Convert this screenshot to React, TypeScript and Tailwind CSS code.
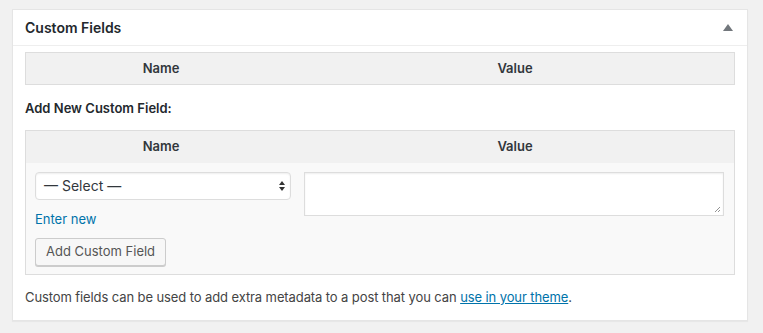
export default function App() {
  const font = { fontFamily: 'Inter, "Liberation Sans", sans-serif' };
  return (
    <div className="min-h-screen w-[763px] h-[333px] bg-[#f1f1f1] pt-[9px] pl-[12px]" style={font}>
      <div className="w-[736px] h-[312px] bg-white border border-[#e5e5e5] shadow-[0_1px_1px_rgba(0,0,0,0.04)]">
        {/* Header */}
        <div className="h-[36px] border-b border-[#eeeeee] flex items-center justify-between pl-[12px] pr-[14px]">
          <h2 className="text-[14px] font-semibold text-[#23282d]">Custom Fields</h2>
          <span className="w-0 h-0 border-l-[5px] border-r-[5px] border-b-[7px] border-l-transparent border-r-transparent border-b-[#72777c]" />
        </div>

        <div className="px-[12px] pt-[6px]">
          {/* Existing fields */}
          <div className="grid grid-cols-[270px_1fr] h-[33px] bg-[#f1f1f1] border border-[#dddddd] text-[13px] font-semibold text-[#32373c]">
            <div className="flex items-center justify-center">Name</div>
            <div className="flex items-center justify-center">Value</div>
          </div>

          <p className="mt-[14px] text-[13px] font-semibold text-[#23282d]">Add New Custom Field:</p>

          {/* New field */}
          <div className="mt-[11px] border border-[#dddddd] bg-[#f9f9f9]">
            <div className="grid grid-cols-[270px_1fr] h-[32px] bg-[#f1f1f1] text-[13px] font-semibold text-[#32373c]">
              <div className="flex items-center justify-center">Name</div>
              <div className="flex items-center justify-center">Value</div>
            </div>
            <div className="grid grid-cols-[270px_1fr] pt-[9px] pb-[8px]">
              <div className="pl-[9px]">
                <div className="w-[256px] h-[28px] bg-white border border-[#dddddd] rounded-[4px] shadow-[inset_0_1px_2px_rgba(0,0,0,0.07)] flex items-center justify-between pl-[8px] pr-[4px] text-[14px] text-[#32373c]">
                  <span>— Select —</span>
                  <svg width="8" height="12" viewBox="0 0 8 12">
                    <path d="M4 1 L7 5 L1 5 Z" fill="#333" />
                    <path d="M4 11 L7 7 L1 7 Z" fill="#333" />
                  </svg>
                </div>
                <div className="mt-[10px] text-[13px] text-[#0073aa]">Enter new</div>
                <button className="mt-[9px] h-[28px] px-[10px] bg-[#f7f7f7] border border-[#cccccc] rounded-[3px] shadow-[0_1px_0_#cccccc] text-[13px] text-[#555555]">
                  Add Custom Field
                </button>
              </div>
              <div className="pl-[8px] pr-[10px]">
                <div className="relative h-[44px] bg-white border border-[#dddddd] shadow-[inset_0_1px_2px_rgba(0,0,0,0.07)]">
                  <svg className="absolute right-[2px] bottom-[2px]" width="7" height="7" viewBox="0 0 7 7">
                    <path d="M1 6 L6 1 M4 6 L6 4" stroke="#777" strokeWidth="0.8" />
                  </svg>
                </div>
              </div>
            </div>
          </div>

          <p className="mt-[13px] text-[13px] text-[#444444] tracking-[-0.1px]">
            Custom fields can be used to add extra metadata to a post that you can{" "}
            <a href="#" className="text-[#0073aa] underline">use in your theme</a>.
          </p>
        </div>
      </div>
    </div>
  );
}
